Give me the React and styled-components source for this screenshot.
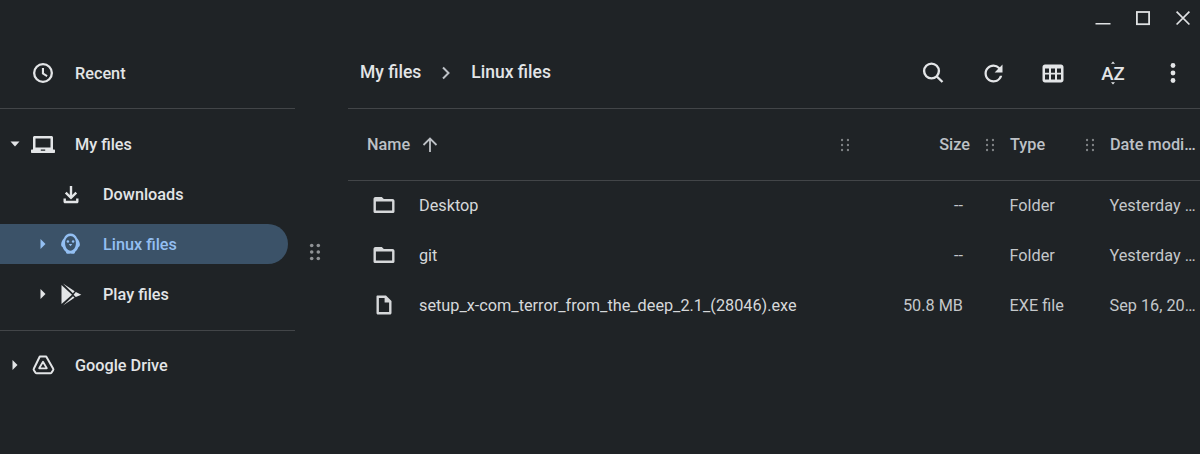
import React from "react";
import styled, { createGlobalStyle } from "styled-components";

const Global = createGlobalStyle`
  html, body { margin: 0; padding: 0; height: 100%; background: #1f2326; overflow: hidden; }
  #root { height: 100%; }
  * { box-sizing: border-box; }
`;

const Shell = styled.div`
  display: flex;
  height: 454px;
  width: 1200px;
  background: #1f2326;
  color: #e3e5e7;
  font-family: Roboto, "Liberation Sans", sans-serif;
  font-size: 16.25px;
`;

const Sidebar = styled.nav`
  width: 295px;
  flex: none;
  padding-top: 48px;
  display: flex;
  flex-direction: column;
`;

const NavRow = styled.div`
  width: 288px;
  height: 40px;
  flex: none;
  margin: 5px 0;
  display: flex;
  align-items: center;
  padding-left: ${(p) => (p.$nested ? 28 : 0)}px;
  border-radius: 0 20px 20px 0;
  background: ${(p) => (p.$active ? "#3b5268" : "transparent")};
  color: ${(p) => (p.$active ? "#93bff2" : "#e3e5e7")};
`;

const Expander = styled.span`
  width: 30px;
  flex: none;
  display: flex;
  justify-content: center;
  align-items: center;
`;

const NavIcon = styled.span`
  width: 25px;
  height: 24px;
  flex: none;
  display: flex;
  justify-content: center;
  align-items: center;
`;

const NavLabel = styled.span`
  margin-left: 20px;
  font-weight: 500;
  white-space: nowrap;
`;

const NavDivider = styled.hr`
  width: 100%;
  flex: none;
  margin: ${(p) => (p.$late ? "11px 0 9px" : "10px 0")};
  border: 0;
  height: 1px;
  background: #424548;
`;

const Splitter = styled.div`
  width: 53px;
  flex: none;
  padding: 50px 13px 0 0;
  display: flex;
  align-items: center;
  justify-content: center;
  color: #8f9295;
`;

const Main = styled.main`
  flex: 1;
  min-width: 0;
  display: flex;
  flex-direction: column;
`;

const WindowBar = styled.div`
  height: 38px;
  display: flex;
  justify-content: flex-end;
  align-items: center;
  gap: 20px;
  padding-right: 7px;
  color: #dfe1e3;
`;

const Toolbar = styled.div`
  height: 71px;
  display: flex;
  align-items: center;
  padding: 0 12px;
  border-bottom: 1px solid #424548;
`;

const Crumb = styled.span`
  font-size: 17.5px;
  font-weight: 500;
  color: #e3e5e7;
  white-space: nowrap;
  margin-bottom: 2px;
`;

const CrumbSep = styled.span`
  width: 50px;
  flex: none;
  display: flex;
  justify-content: center;
  color: #bdc1c6;
`;

const Tools = styled.div`
  margin-left: auto;
  display: flex;
  gap: 30px;
  color: #e3e5e7;
`;

const Tool = styled.span`
  width: 30px;
  height: 30px;
  display: flex;
  justify-content: center;
  align-items: center;
`;

const grid = "507px 145px 100px 100px";

const HeaderRow = styled.div`
  height: 72px;
  display: grid;
  grid-template-columns: ${grid};
  align-items: center;
  border-bottom: 1px solid #424548;
  color: #bdc1c6;
  font-weight: 500;
`;

const HeaderCell = styled.div`
  display: flex;
  align-items: center;
  min-width: 0;
  padding-left: ${(p) => p.$pl || 0}px;
  justify-content: ${(p) => (p.$end ? "flex-end" : "flex-start")};
`;

const SortArrow = styled.span`
  margin-left: 10px;
  display: flex;
`;

const Grip = styled.span`
  width: 20px;
  flex: none;
  display: flex;
  justify-content: center;
  color: #7f8386;
  margin-left: ${(p) => (p.$auto ? "auto" : p.$gap ? "10px" : 0)};
`;

const HeaderClip = styled.span`
  white-space: nowrap;
  overflow: hidden;
  text-overflow: ellipsis;
  min-width: 0;
  padding-right: 3px;
`;

const FileRow = styled.div`
  height: 50px;
  padding-bottom: 2px;
  display: grid;
  grid-template-columns: ${grid};
  align-items: center;
  color: #c4c7ca;
`;

const NameCell = styled.div`
  display: flex;
  align-items: center;
  gap: 23px;
  padding-left: 24px;
  color: #d6d8da;
  white-space: nowrap;
`;

const SizeCell = styled.div`
  text-align: right;
  padding-right: 37px;
`;

const TextCell = styled.div`
  padding: 0 3px 0 9.5px;
  white-space: nowrap;
  overflow: hidden;
  text-overflow: ellipsis;
`;

const Svg = ({ s = 24, children, ...rest }) => (
  <svg width={s} height={s} viewBox="0 0 24 24" fill="currentColor" {...rest}>{children}</svg>
);

const TriDown = () => <svg width="10" height="6" viewBox="0 0 10 6" fill="currentColor"><path d="M.5.5h9L5 5.5z" /></svg>;
const TriRight = () => <svg width="6" height="10" viewBox="0 0 6 10" fill="currentColor"><path d="M.5 0v10L5.5 5z" /></svg>;

const Clock = () => (
  <Svg><path d="M12 2a10 10 0 1 0 0 20 10 10 0 0 0 0-20zm0 17.700a7.700 7.700 0 1 1 0-15.400 7.700 7.700 0 0 1 0 15.400z" /><path d="M13 7h-2.100v6.100l4.700 2.800 1-1.700-3.600-2.100z" /></Svg>
);
const Laptop = () => (
  <Svg><path fillRule="evenodd" d="M3.500 4h17c.8 0 1.500.7 1.500 1.500V17.500h1.300c.4 0 .7.300.7.700v1.800c0 .6-.4 1-1 1H1c-.6 0-1-.4-1-1v-1.800c0-.4.300-.7.700-.7H2V5.500C2 4.700 2.700 4 3.500 4zM4.500 6.500v9h15v-9zM9.800 17.500v1.300h4.400v-1.300z" /></Svg>
);
const Download = () => (
  <Svg><path d="M10.800 4h2.400v9l3.200-3.200 1.700 1.700-6.100 6.100-6.100-6.100 1.700-1.700 3.200 3.200z" /><path d="M4.500 16.500h2.400v2.300h10.200v-2.300h2.400v3.200c0 .8-.7 1.500-1.500 1.500H6c-.8 0-1.500-.7-1.500-1.500z" /></Svg>
);
const Penguin = () => (
  <Svg width={27} height={24} preserveAspectRatio="none">
    <path fillRule="evenodd" d="M12 1.500c2.900 0 5.300 1.900 6.300 4.700 1.300 1.500 2.700 4 2.700 6.300 0 1.300-.6 2.300-1.500 2.700-.7 2-1.800 3.700-3.200 4.800.2 1-.6 1.800-1.800 1.800-.9 0-1.600-.3-2.500-.3s-1.600.3-2.500.3c-1.200 0-2-.8-1.800-1.800-1.400-1.100-2.500-2.800-3.200-4.800C3.600 14.800 3 13.800 3 12.500c0-2.300 1.400-4.800 2.700-6.300 1-2.800 3.400-4.700 6.300-4.700zm0 2.400c-3 0-5.200 3-5.200 7.100s2.200 7.700 5.200 7.700 5.200-3.600 5.200-7.700-2.200-7.100-5.200-7.100z" />
    <circle cx="9.500" cy="9.500" r="1.200" /><circle cx="14.500" cy="9.500" r="1.200" />
    <path d="M10.300 12h3.400L12 14.200z" />
  </Svg>
);
const Play = () => (
  <Svg>
    <path d="M2.500 3 13 12.800 2.500 22z" />
    <path d="M4 1.500 15.700 9.300 13.900 11.200z" />
    <path d="M4 23.500 15.500 15.700 14 14.200z" />
    <path d="M16.800 10 22.300 12.800 16.800 15 14.600 12.700z" />
  </Svg>
);
const Drive = () => (
  <Svg fill="none" stroke="currentColor" strokeLinejoin="round">
    <path strokeWidth="2" d="M8.800 3.500h6.400L22.200 15.800c.3.500.2 1-.1 1.400l-1.600 2.400c-.3.400-.7.600-1.200.6H5.700c-.5 0-.9-.2-1.200-.6l-1.600-2.400c-.3-.4-.4-.9-.1-1.400z" />
    <path strokeWidth="1.800" d="M12 8.700 15.800 15.300H8.200z" />
  </Svg>
);
const Grip2x3 = ({ big }) => {
  const r = big ? 1.8 : 1.2;
  const dx = big ? 3.3 : 3;
  const dy = big ? 6.5 : 5;
  const w = big ? 14 : 8;
  const h = big ? 18 : 14;
  return (
    <svg width={w} height={h} viewBox={`0 0 ${w} ${h}`} fill="currentColor">
      {[-1, 0, 1].map((j) => [-1, 1].map((i) => (
        <circle key={`${i}${j}`} cx={w / 2 + i * dx} cy={h / 2 + j * dy} r={r} />
      )))}
    </svg>
  );
};
const Folder = () => (
  <Svg><path fillRule="evenodd" d="M3.500 4h6.300l2 2h8.700c1.100 0 2 .9 2 2v10.500c0 1-.9 1.500-2 1.500h-17c-1.100 0-2-.5-2-1.500V6c0-1.100.9-2 2-2zM3.900 8.400v9.200h16.200V8.400z" /></Svg>
);
const FileIcon = () => (
  <Svg><path fillRule="evenodd" d="M5.500 2.500h8.500L19.500 8v12c0 .9-.7 1.500-1.500 1.500H6c-.9 0-1.500-.6-1.500-1.500V3.500c0-.6.400-1 1-1zM6.900 4.900v14.200h10.200V9.400h-4.500V4.900z" /></Svg>
);

const Name = ({ icon, children }) => (
  <NameCell>{icon}<span>{children}</span></NameCell>
);

export default function App() {
  return (
    <Shell>
      <Global />
      <Sidebar>
        <NavRow><Expander /><NavIcon><Clock /></NavIcon><NavLabel>Recent</NavLabel></NavRow>
        <NavDivider />
        <NavRow><Expander><TriDown /></Expander><NavIcon><Laptop /></NavIcon><NavLabel>My files</NavLabel></NavRow>
        <NavRow $nested><Expander /><NavIcon><Download /></NavIcon><NavLabel>Downloads</NavLabel></NavRow>
        <NavRow $nested $active><Expander><TriRight /></Expander><NavIcon><Penguin /></NavIcon><NavLabel>Linux files</NavLabel></NavRow>
        <NavRow $nested><Expander><TriRight /></Expander><NavIcon><Play /></NavIcon><NavLabel>Play files</NavLabel></NavRow>
        <NavDivider $late />
        <NavRow><Expander><TriRight /></Expander><NavIcon><Drive /></NavIcon><NavLabel>Google Drive</NavLabel></NavRow>
      </Sidebar>
      <Splitter><Grip2x3 big /></Splitter>
      <Main>
        <WindowBar>
          <svg width="20" height="20" viewBox="0 0 20 20" fill="currentColor"><rect x="2.500" y="14" width="15" height="1.500" /></svg>
          <svg width="20" height="20" viewBox="0 0 20 20" fill="none" stroke="currentColor" strokeWidth="1.800"><rect x="3.900" y="3" width="12.200" height="12.200" /></svg>
          <svg width="20" height="20" viewBox="0 0 20 20" fill="none" stroke="currentColor" strokeWidth="1.700"><path d="M3.600 2.700 16.400 15.500M16.400 2.700 3.600 15.500" /></svg>
        </WindowBar>
        <Toolbar>
          <Crumb>My files</Crumb>
          <CrumbSep>
            <svg width="10" height="14" viewBox="0 0 10 14" fill="none" stroke="currentColor" strokeWidth="2"><path d="M2 1.500 7.500 7 2 12.500" /></svg>
          </CrumbSep>
          <Crumb>Linux files</Crumb>
          <Tools>
            <Tool><Svg s={24} fill="none" stroke="currentColor"><circle cx="10.500" cy="10" r="7.400" strokeWidth="2.400" /><path d="M15.800 15.500 21.500 21" strokeWidth="2.400" /></Svg></Tool>
            <Tool><Svg s={27}><path d="M17.650 6.350A7.958 7.958 0 0 0 12 4c-4.420 0-7.990 3.580-7.990 8s3.570 8 7.990 8c3.730 0 6.840-2.550 7.730-6h-2.080A5.990 5.990 0 0 1 12 18c-3.310 0-6-2.690-6-6s2.690-6 6-6c1.660 0 3.140.69 4.220 1.780L13 11h7V4l-2.350 2.350z" /></Svg></Tool>
            <Tool>
              <svg width="22" height="19" viewBox="0 0 22 19" fill="currentColor">
                <path fillRule="evenodd" d="M3 .5h16c1.400 0 2.500 1.100 2.500 2.500v13c0 1.400-1.100 2.500-2.500 2.500H3C1.600 18.500.5 17.400.5 16V3C.5 1.600 1.600.5 3 .5zM3 4.500v4.300h4v-4.300zm6 0v4.300h4v-4.300zm6 0v4.300h4v-4.300zM3 10.500v5h4v-5zm6 0v5h4v-5zm6 0v5h4v-5z" />
              </svg>
            </Tool>
            <Tool><svg width="26" height="26" viewBox="0 0 26 26" fill="currentColor"><path d="M11 3.800 13 1.500l2 2.300zM11 22.200 13 24.500l2-2.300z" /><text x="13" y="19.500" textAnchor="middle" fontFamily="Roboto, sans-serif" fontWeight="500" fontSize="18.500">AZ</text></svg></Tool>
            <Tool><svg width="6" height="22" viewBox="0 0 6 22" fill="currentColor"><circle cx="3" cy="3.500" r="2.400" /><circle cx="3" cy="11" r="2.400" /><circle cx="3" cy="18.500" r="2.400" /></svg></Tool>
          </Tools>
        </Toolbar>
        <HeaderRow>
          <HeaderCell $pl={19}>
            <span>Name</span>
            <SortArrow>
              <svg width="20" height="20" viewBox="0 0 20 20" fill="none" stroke="currentColor" strokeWidth="1.800"><path d="M10 17V3.500M3.500 10 10 3.500 16.500 10" /></svg>
            </SortArrow>
            <Grip $auto><Grip2x3 /></Grip>
          </HeaderCell>
          <HeaderCell $end><span>Size</span><Grip $gap><Grip2x3 /></Grip></HeaderCell>
          <HeaderCell $pl={10}><span>Type</span><Grip $auto><Grip2x3 /></Grip></HeaderCell>
          <HeaderCell $pl={10}><HeaderClip>Date modified</HeaderClip></HeaderCell>
        </HeaderRow>
        <FileRow>
          <Name icon={<Folder />}>Desktop</Name>
          <SizeCell>--</SizeCell>
          <TextCell>Folder</TextCell>
          <TextCell>Yesterday 10:42 AM</TextCell>
        </FileRow>
        <FileRow>
          <Name icon={<Folder />}>git</Name>
          <SizeCell>--</SizeCell>
          <TextCell>Folder</TextCell>
          <TextCell>Yesterday 10:42 AM</TextCell>
        </FileRow>
        <FileRow>
          <Name icon={<FileIcon />}>setup_x-com_terror_from_the_deep_2.1_(28046).exe</Name>
          <SizeCell>50.8 MB</SizeCell>
          <TextCell>EXE file</TextCell>
          <TextCell>Sep 16, 2021, 1:32 PM</TextCell>
        </FileRow>
      </Main>
    </Shell>
  );
}
